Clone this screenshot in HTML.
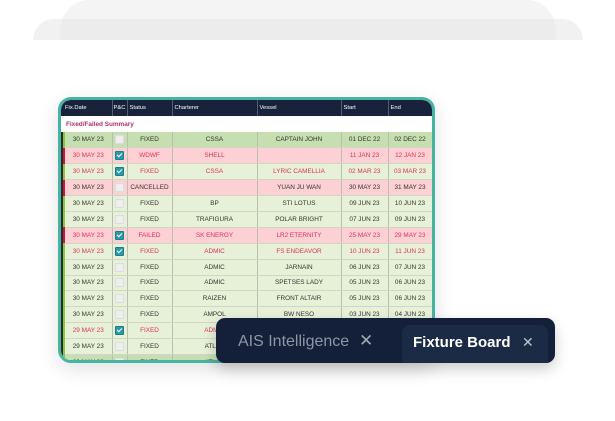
<!DOCTYPE html>
<html><head><style>
*{margin:0;padding:0;box-sizing:border-box}
body{width:615px;height:421px;background:#fff;position:relative;overflow:hidden;font-family:"Liberation Sans",sans-serif}
.s1{position:absolute;left:61px;top:0;width:494px;height:40px;background:rgba(230,230,230,.45);border-radius:28px 28px 0 0}
.s2{position:absolute;left:33px;top:19px;width:550px;height:21px;background:rgba(230,230,230,.55);border-radius:24px 24px 0 0}
.card{position:absolute;left:58px;top:97px;width:377px;height:266px;border:3px solid #47b3a4;border-radius:13px;overflow:hidden;background:#fff;box-shadow:0 6px 20px rgba(0,0,0,.12)}
table{border-collapse:collapse;font-size:6.4px;table-layout:fixed;width:371px}
th{background:#18223a;color:#fff;font-weight:normal;text-align:left;height:16px;padding-left:2px;border-right:1px solid #555d70;font-size:5.8px;overflow:hidden;white-space:nowrap}
td{height:15.9px;text-align:center;border-right:1px solid #b8bfb0;border-bottom:1px solid #cfd6c8;color:#333;white-space:nowrap;overflow:hidden}
td.st{padding:0;border:none}
.sum td{background:#fff;color:#b0306a;font-weight:bold;text-align:left;padding-left:5px;height:16px;border:none}
.g td{background:#e6f1d8}.d td{background:#c5dfb0}.r td{background:#fdd0d3}
.rt td{color:#e0305a}
.sg{border-left:2px solid #2a2a2a;background:#8cc63f!important;height:100%}
.sr{border-left:2px solid #2a2a2a;background:#d0103a!important;height:100%}
.cb{display:inline-block;width:9px;height:9px;background:#eee;border:1px solid #ddd;border-radius:1px;vertical-align:middle}
.ck{background:#2a9aa8;border-color:#1d7f8c;position:relative}
.ck:after{content:"";position:absolute;left:2px;top:0px;width:2px;height:4px;border:solid #fff;border-width:0 1px 1px 0;transform:rotate(45deg)}
.tabs{position:absolute;left:216px;top:318px;width:339px;height:45px;background:#14203a;border-radius:9px;box-shadow:0 6px 14px rgba(0,0,0,.2)}
.t1{position:absolute;left:22px;top:15px;color:#8e96a4;font-size:16px}
.t2{position:absolute;left:186px;top:7px;width:146px;height:38px;background:#1b2b46;border-radius:8px 8px 0 0}
.t2 span{position:absolute;left:11px;top:9px;color:#fff;font-size:15px;font-weight:bold}
.x{position:absolute;font-size:17px}
</style></head><body>
<div class="s1"></div><div class="s2"></div>
<div class="card"><table>
<colgroup><col style="width:4px"><col style="width:47px"><col style="width:15px"><col style="width:45px"><col style="width:85px"><col style="width:84px"><col style="width:47px"><col style="width:44px"></colgroup>
<tr><th style="padding:0;border:none"></th><th style="padding-left:0">Fix.Date</th><th style="padding-left:1px">P&amp;C</th><th>Status</th><th>Charterer</th><th>Vessel</th><th>Start</th><th>End</th></tr>
<tr class="sum"><td colspan="8">Fixed/Failed Summary</td></tr>
<tr class="d"><td class="st"><div class="sg"></div></td><td>30 MAY 23</td><td><span class="cb"></span></td><td>FIXED</td><td>CSSA</td><td>CAPTAIN JOHN</td><td>01 DEC 22</td><td>02 DEC 22</td></tr>
<tr class="r rt"><td class="st"><div class="sr"></div></td><td>30 MAY 23</td><td><span class="cb ck"></span></td><td>WDWF</td><td>SHELL</td><td></td><td>11 JAN 23</td><td>12 JAN 23</td></tr>
<tr class="g rt"><td class="st"><div class="sg"></div></td><td>30 MAY 23</td><td><span class="cb ck"></span></td><td>FIXED</td><td>CSSA</td><td>LYRIC CAMELLIA</td><td>02 MAR 23</td><td>03 MAR 23</td></tr>
<tr class="r"><td class="st"><div class="sr"></div></td><td>30 MAY 23</td><td><span class="cb"></span></td><td>CANCELLED</td><td></td><td>YUAN JU WAN</td><td>30 MAY 23</td><td>31 MAY 23</td></tr>
<tr class="g"><td class="st"><div class="sg"></div></td><td>30 MAY 23</td><td><span class="cb"></span></td><td>FIXED</td><td>BP</td><td>STI LOTUS</td><td>09 JUN 23</td><td>10 JUN 23</td></tr>
<tr class="g"><td class="st"><div class="sg"></div></td><td>30 MAY 23</td><td><span class="cb"></span></td><td>FIXED</td><td>TRAFIGURA</td><td>POLAR BRIGHT</td><td>07 JUN 23</td><td>09 JUN 23</td></tr>
<tr class="r rt"><td class="st"><div class="sr"></div></td><td>30 MAY 23</td><td><span class="cb ck"></span></td><td>FAILED</td><td>SK ENERGY</td><td>LR2 ETERNITY</td><td>25 MAY 23</td><td>29 MAY 23</td></tr>
<tr class="g rt"><td class="st"><div class="sg"></div></td><td>30 MAY 23</td><td><span class="cb ck"></span></td><td>FIXED</td><td>ADMIC</td><td>FS ENDEAVOR</td><td>10 JUN 23</td><td>11 JUN 23</td></tr>
<tr class="g"><td class="st"><div class="sg"></div></td><td>30 MAY 23</td><td><span class="cb"></span></td><td>FIXED</td><td>ADMIC</td><td>JARNAIN</td><td>06 JUN 23</td><td>07 JUN 23</td></tr>
<tr class="g"><td class="st"><div class="sg"></div></td><td>30 MAY 23</td><td><span class="cb"></span></td><td>FIXED</td><td>ADMIC</td><td>SPETSES LADY</td><td>05 JUN 23</td><td>06 JUN 23</td></tr>
<tr class="g"><td class="st"><div class="sg"></div></td><td>30 MAY 23</td><td><span class="cb"></span></td><td>FIXED</td><td>RAIZEN</td><td>FRONT ALTAIR</td><td>05 JUN 23</td><td>06 JUN 23</td></tr>
<tr class="g"><td class="st"><div class="sg"></div></td><td>30 MAY 23</td><td><span class="cb"></span></td><td>FIXED</td><td>AMPOL</td><td>BW NESO</td><td>03 JUN 23</td><td>04 JUN 23</td></tr>
<tr class="g rt"><td class="st"><div class="sg"></div></td><td>29 MAY 23</td><td><span class="cb ck"></span></td><td>FIXED</td><td>ADMIC</td><td>ZAP</td><td>03 JUN 23</td><td>04 JUN 23</td></tr>
<tr class="g"><td class="st"><div class="sg"></div></td><td>29 MAY 23</td><td><span class="cb"></span></td><td>FIXED</td><td>ATLAS</td><td>KIRA</td><td>02 JUN 23</td><td>03 JUN 23</td></tr>
<tr class="d"><td class="st"><div class="sg"></div></td><td>29 MAY 23</td><td><span class="cb"></span></td><td>FIXED</td><td>ATLAS</td><td>KIRA</td><td>02 JUN 23</td><td>03 JUN 23</td></tr>
</table></div>
<div class="tabs">
<div class="t1">AIS Intelligence</div><div class="x" style="left:143px;top:13px;color:#a0a8b4">✕</div>
<div class="t2"><span>Fixture Board</span><div class="x" style="left:120px;top:9px;color:#c0c6d0;font-size:14px">✕</div></div>
</div>
</body></html>
